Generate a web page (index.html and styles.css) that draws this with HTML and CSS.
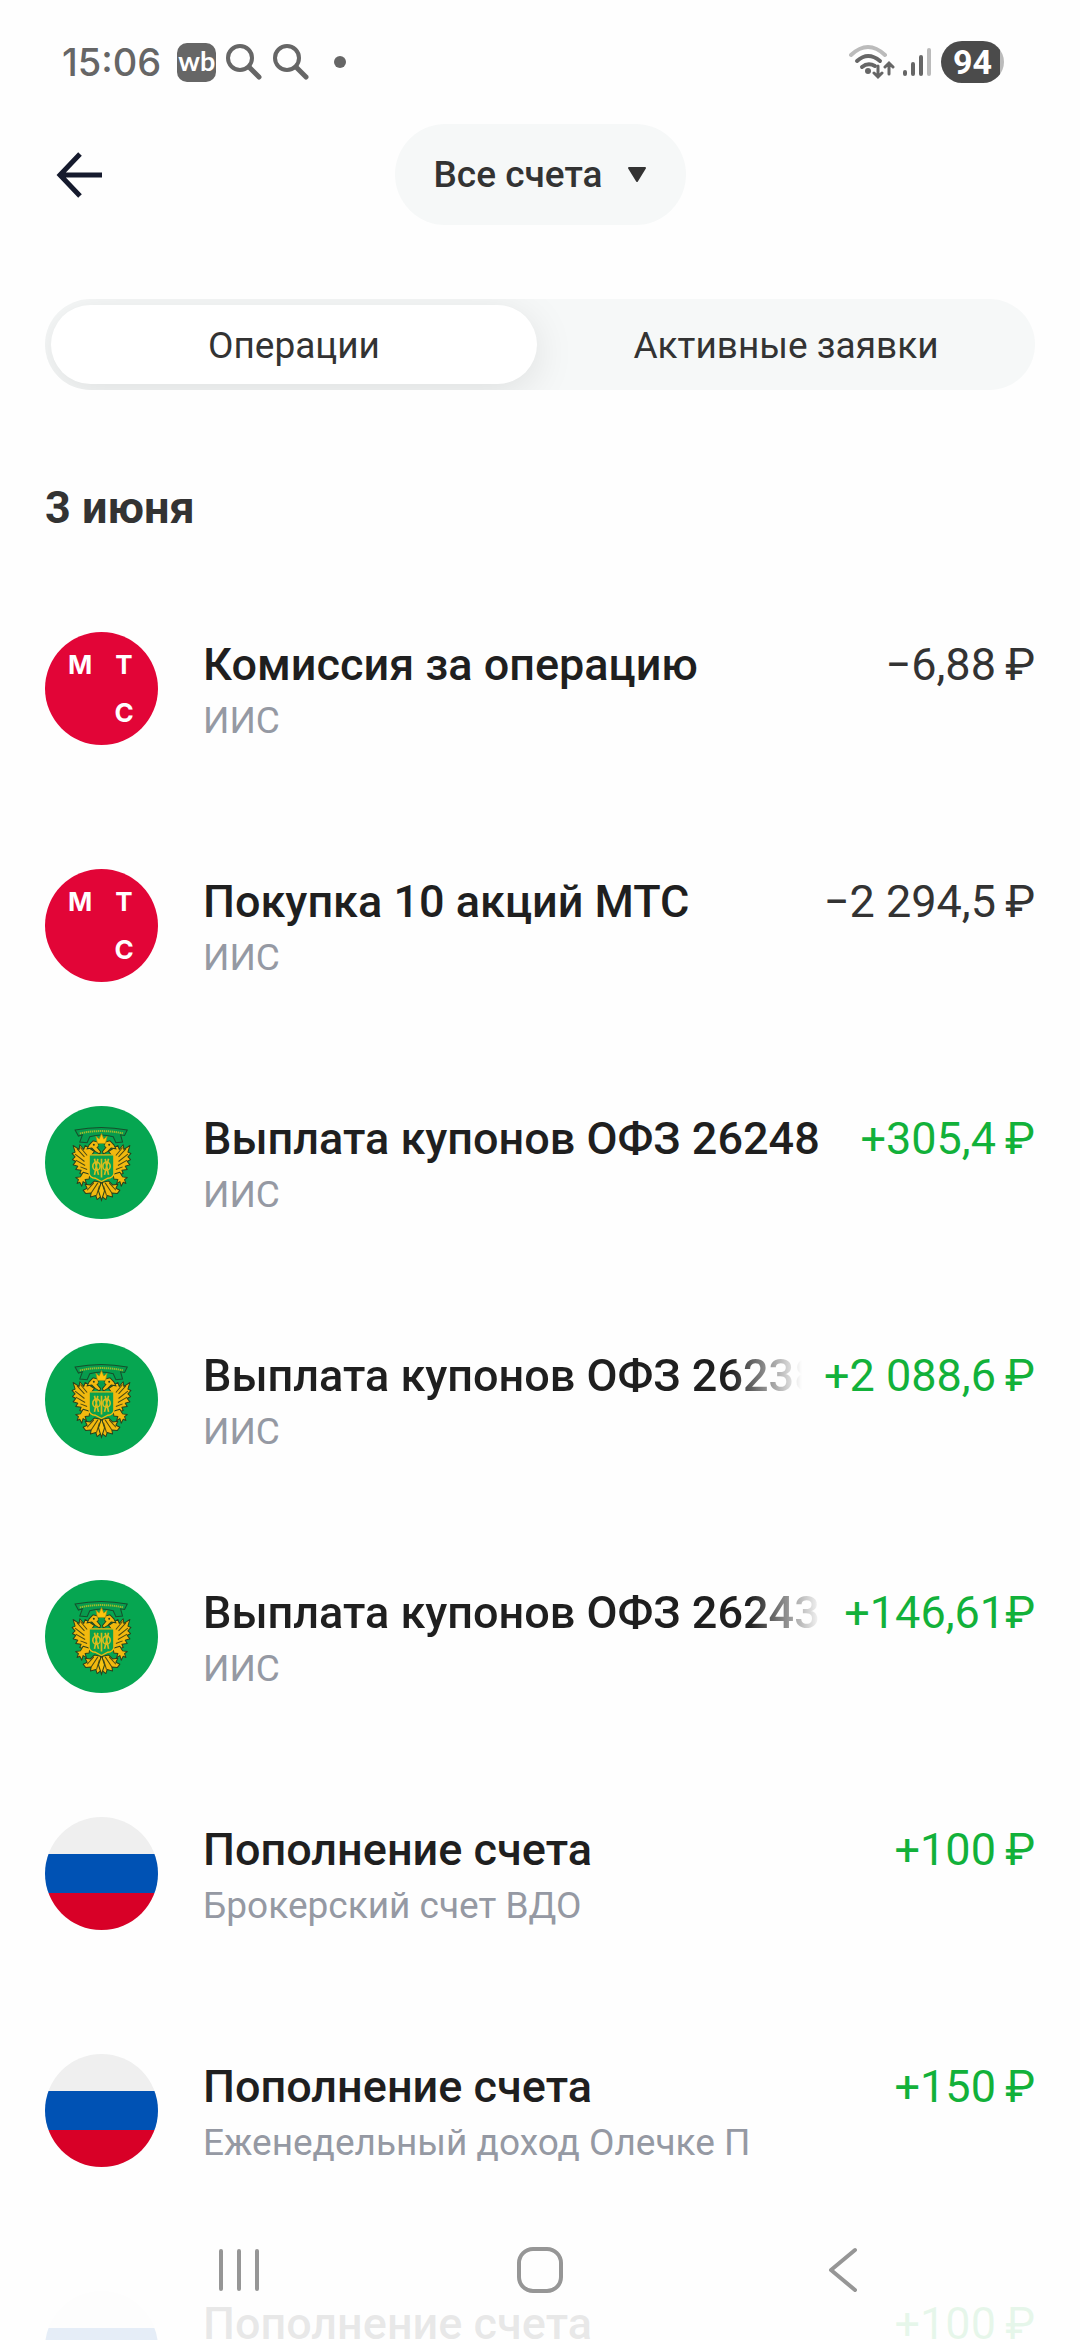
FILE: index.html
```html
<!DOCTYPE html>
<html lang="ru">

<head>
    <meta charset="UTF-8">
    <meta name="viewport" content="width=device-width, initial-scale=1.0">
    <title>Операции</title>
    <link rel="stylesheet" href="styles.css">
</head>

<body>
    <!-- иконки, которые повторяются в списке -->
    <svg class="sprite" aria-hidden="true">
        <symbol id="search" viewBox="0 0 36 36">
            <circle cx="14" cy="14" r="12" fill="none" stroke="#666" stroke-width="4" />
            <path d="M23 23L33 33" stroke="#666" stroke-width="5" stroke-linecap="round" />
        </symbol>
        <symbol id="ofz" viewBox="46 78 338 338">
            <rect x="46" y="78" width="338" height="338" fill="#06a651" />
            <!-- лента -->
            <path d="M136 150Q214 134 292 150L284 166L272 164L278 186L258 188L250 170Q214 160 180 170L172 188L150 186L158 164L146 168Z" fill="#079b4d" stroke="#164f2c" stroke-width="3" />
            <path d="M150 160Q214 146 280 160" fill="none" stroke="#9cba2c" stroke-width="6" stroke-dasharray="4 2" />
            <!-- половина орла, вторая отражается -->
            <g id="half">
                <path d="M194 214L166 196L162 208L150 194L148 208L130 196L136 216L127 220L136 230L128 238L138 244L130 254L144 258L138 268L154 270L150 280L164 284L184 286L184 226Z" fill="#f2b90f" stroke="#29401c" stroke-width="3" stroke-linejoin="round" />
                <path d="M142 206L164 230M136 222L164 244M138 240L166 256M152 202L172 226M152 260L172 268" stroke="#4b4a12" stroke-width="3" />
                <path d="M210 222L196 214L186 204L172 206L178 194L190 182L204 186L208 198L202 202L212 214Z" fill="#f2b90f" stroke="#29401c" stroke-width="3" />
                <circle cx="192" cy="194" r="3" fill="#29401c" />
                <path d="M160 276L180 282L178 296L166 298L170 310L160 304L156 318L150 306L142 310L146 298L138 292L152 290Z" fill="#f2b90f" stroke="#29401c" stroke-width="3" stroke-linejoin="round" />
                <path d="M212 306L194 302L182 314L166 312L172 324L160 330L168 340L184 338L182 350L198 346L202 358L212 350Z" fill="#f2b90f" stroke="#29401c" stroke-width="3" stroke-linejoin="round" />
                <path d="M204 308L184 338M209 316L200 346M192 308L172 330" stroke="#4b4a12" stroke-width="3" />
            </g>
            <use href="#half" transform="translate(430 0) scale(-1 1)" />
            <path d="M215 304L206 332L215 360L224 332Z" fill="#f6c413" stroke="#29401c" stroke-width="3" />
            <!-- корона -->
            <path d="M198 168L208 177L215 160L222 177L232 168L227 190H203Z" fill="#fdc50d" stroke="#9a8a12" stroke-width="2" />
            <path d="M203 194H227L215 212Z" fill="#079b4d" />
            <!-- щит -->
            <path d="M178 224H252V280Q250 292 234 294L215 304L196 294Q180 292 178 280Z" fill="#0aa14e" stroke="#f2b90f" stroke-width="4" />
            <g fill="none" stroke="#d9bd1d" stroke-width="5">
                <path d="M215 236V292M194 236L206 284M236 236L224 284M204 236L194 284M226 236L236 284" />
                <ellipse cx="200" cy="258" rx="11" ry="12" />
                <ellipse cx="230" cy="258" rx="11" ry="12" />
            </g>
        </symbol>
        <symbol id="rus" viewBox="0 0 113 113">
            <rect width="113" height="113" fill="#efefef" />
            <rect y="37" width="113" height="39" fill="#0052b4" />
            <rect y="76" width="113" height="37" fill="#d80027" />
        </symbol>
    </svg>

    <div class="screen">
        <div class="status">
            <span class="time">15:06</span>
            <span class="wb">wb</span>
            <svg class="loupe"><use href="#search" /></svg>
            <svg class="loupe"><use href="#search" /></svg>
            <span class="dot"></span>
            <svg class="wifi" viewBox="0 0 46 36">
                <g fill="none" stroke="#666" stroke-width="4" stroke-linecap="round">
                    <path d="M2 11Q19 -5 36 11" stroke="#bbb" />
                    <path d="M8 17Q19 7 31 17" />
                    <path d="M13 23Q19 18 26 22" />
                    <path d="M29 22V32M25 29L29 33L33 29M40 30V20M36 23L40 19L44 23" stroke-width="3" />
                </g>
                <circle cx="19" cy="27" r="3" fill="#666" />
            </svg>
            <svg class="signal" viewBox="0 0 28 30">
                <g stroke="#666" stroke-width="4" stroke-linecap="round">
                    <path d="M2 25V27M10 17V27M18 10V27" />
                    <path d="M26 3V27" stroke="#bbb" />
                </g>
            </svg>
            <span class="battery">94</span>
        </div>

        <div class="header">
            <button class="back" aria-label="Назад">
                <svg viewBox="0 0 46 46" width="46" height="46">
                    <path d="M46 23H4M24 2L4 23L24 44" fill="none" stroke="#151a2d" stroke-width="5" />
                </svg>
            </button>
            <button class="account">
                Все счета
                <svg viewBox="0 0 20 16" width="20" height="16">
                    <path d="M2 1H18L10 14Z" fill="#333" stroke="#333" stroke-width="2" stroke-linejoin="round" />
                </svg>
            </button>
        </div>

        <div class="tabs">
            <button class="tab active">Операции</button>
            <button class="tab">Активные заявки</button>
        </div>

        <h2 class="date">3 июня</h2>

        <ul class="list">
            <li class="item">
                <div class="logo mts">
                    <span>М</span>
                    <span>Т</span>
                    <span class="last">С</span>
                </div>
                <div class="info">
                    <p class="name">Комиссия за операцию</p>
                    <p class="sub">ИИС</p>
                </div>
                <span class="sum">−6,88&thinsp;₽</span>
            </li>
            <li class="item">
                <div class="logo mts">
                    <span>М</span>
                    <span>Т</span>
                    <span class="last">С</span>
                </div>
                <div class="info">
                    <p class="name">Покупка 10 акций МТС</p>
                    <p class="sub">ИИС</p>
                </div>
                <span class="sum">−2 294,5&thinsp;₽</span>
            </li>
            <li class="item">
                <svg class="logo"><use href="#ofz" /></svg>
                <div class="info">
                    <p class="name">Выплата купонов ОФЗ 26248</p>
                    <p class="sub">ИИС</p>
                </div>
                <span class="sum plus">+305,4&thinsp;₽</span>
            </li>
            <li class="item">
                <svg class="logo"><use href="#ofz" /></svg>
                <div class="info">
                    <p class="name fade">Выплата купонов ОФЗ 26238</p>
                    <p class="sub">ИИС</p>
                </div>
                <span class="sum plus">+2 088,6&thinsp;₽</span>
            </li>
            <li class="item">
                <svg class="logo"><use href="#ofz" /></svg>
                <div class="info">
                    <p class="name fade">Выплата купонов ОФЗ 26243</p>
                    <p class="sub">ИИС</p>
                </div>
                <span class="sum plus">+146,61₽</span>
            </li>
            <li class="item">
                <svg class="logo"><use href="#rus" /></svg>
                <div class="info">
                    <p class="name">Пополнение счета</p>
                    <p class="sub">Брокерский счет ВДО</p>
                </div>
                <span class="sum plus">+100&thinsp;₽</span>
            </li>
            <li class="item">
                <svg class="logo"><use href="#rus" /></svg>
                <div class="info">
                    <p class="name">Пополнение счета</p>
                    <p class="sub">Еженедельный доход Олечке П</p>
                </div>
                <span class="sum plus">+150&thinsp;₽</span>
            </li>
            <li class="item">
                <svg class="logo"><use href="#rus" /></svg>
                <div class="info">
                    <p class="name">Пополнение счета</p>
                </div>
                <span class="sum plus">+100&thinsp;₽</span>
            </li>
        </ul>

        <div class="navbar">
            <button aria-label="Недавние">
                <svg viewBox="0 0 48 48" width="48" height="48">
                    <path d="M6 5V43M24 5V43M42 5V43" stroke="#969696" stroke-width="4" stroke-linecap="round" />
                </svg>
            </button>
            <button aria-label="Домой">
                <svg viewBox="0 0 48 48" width="48" height="48">
                    <rect x="3" y="3" width="42" height="42" rx="14" fill="none" stroke="#969696" stroke-width="4" />
                </svg>
            </button>
            <button aria-label="Назад">
                <svg viewBox="0 0 48 48" width="48" height="48">
                    <path d="M38 4L14 24L38 44" fill="none" stroke="#969696" stroke-width="4" stroke-linecap="round" stroke-linejoin="round" />
                </svg>
            </button>
        </div>
    </div>
</body>

</html>
```
FILE: styles.css
```css
* {
    margin: 0;
    padding: 0;
    box-sizing: border-box;
}

body {
    background-color: #fefefe;
    font-family: Roboto, sans-serif;
    color: #333;
}

button {
    border: none;
    background: none;
    font: inherit;
    color: inherit;
}

svg {
    display: block;
    flex-shrink: 0;
}

.sprite {
    position: absolute;
    width: 0;
    height: 0;
}

.screen {
    position: relative;
    display: flex;
    flex-direction: column;
    height: 100vh;
    overflow: hidden;
}

/* строка состояния */
.status {
    display: flex;
    align-items: center;
    flex-shrink: 0;
    height: 124px;
    padding: 0 76px 0 62px;
    color: #666;
}

.time {
    font-family: Inter, sans-serif;
    font-size: 38px;
    font-weight: 500;
    margin-right: 16px;
}

.wb {
    width: 39px;
    height: 39px;
    border-radius: 10px;
    margin-right: 10px;
    background-color: #666;
    color: #fff;
    font-family: Lato, sans-serif;
    font-size: 27px;
    font-weight: 700;
    line-height: 36px;
    text-align: center;
}

.loupe {
    width: 36px;
    height: 36px;
    margin-right: 11px;
}

.dot {
    width: 12px;
    height: 12px;
    margin-left: 14px;
    border-radius: 50%;
    background-color: #666;
}

.wifi {
    width: 46px;
    height: 36px;
    margin-left: auto;
}

.signal {
    width: 28px;
    height: 30px;
    margin: 0 10px 0 8px;
}

.battery {
    width: 63px;
    height: 42px;
    border-radius: 21px;
    background: linear-gradient(to right, #4b4b4b 94%, #bbb 94%);
    color: #fff;
    font-size: 34px;
    font-weight: 700;
    line-height: 42px;
    text-align: center;
}

/* шапка */
.header {
    display: grid;
    grid-template-columns: 1fr auto 1fr;
    align-items: center;
    flex-shrink: 0;
    padding: 0 56px;
}

.back {
    justify-self: start;
}

.account {
    display: flex;
    align-items: center;
    gap: 24px;
    padding: 28px 39px;
    border-radius: 51px;
    background-color: #f6f8f8;
    font-size: 37px;
    font-weight: 500;
    line-height: 45px;
}

.tabs {
    display: grid;
    grid-template-columns: 1fr 1fr;
    gap: 6px;
    flex-shrink: 0;
    margin: 74px 45px 0;
    padding: 6px;
    border-radius: 46px;
    background-color: #f6f8f8;
    overflow: hidden;
}

.tab {
    padding: 18px 0 16px;
    border-radius: 40px;
    font-size: 37px;
    line-height: 45px;
}

.tab.active {
    background-color: #fff;
    box-shadow: 0 8px 40px rgba(0, 0, 0, 0.1);
}

.date {
    flex-shrink: 0;
    margin: 91px 45px 35px;
    font-size: 45px;
    font-weight: 700;
    line-height: 54px;
}

/* список операций */
.list {
    flex: 1;
    min-height: 0;
    padding: 0 45px;
    list-style: none;
    overflow-y: auto;
    scrollbar-width: none;
}

.item {
    display: flex;
    align-items: flex-start;
    padding: 62px 0;
}

.logo {
    flex-shrink: 0;
    width: 113px;
    height: 113px;
    margin-right: 45px;
    border-radius: 50%;
}

.mts {
    display: grid;
    grid-template-columns: 44px 44px;
    grid-template-rows: 48px 48px;
    align-content: start;
    padding: 9px 13px;
    background-color: #e20537;
    color: #fff;
    font-family: Inter, sans-serif;
    font-size: 26px;
    font-weight: 700;
    line-height: 48px;
    text-align: center;
}

.mts .last {
    grid-column: 2;
}

.info {
    flex: 1;
    min-width: 0;
    padding-top: 6px;
}

.name {
    color: #1f1f1f;
    font-size: 45px;
    font-weight: 500;
    line-height: 54px;
    white-space: nowrap;
    overflow: hidden;
}

.fade {
    -webkit-mask-image: linear-gradient(to left, transparent, #000 72px);
    mask-image: linear-gradient(to left, transparent, #000 72px);
}

.sub {
    margin-top: 6px;
    color: #9599a3;
    font-size: 37px;
    line-height: 45px;
}

.sum {
    padding: 6px 0 0 22px;
    font-size: 45px;
    line-height: 54px;
    white-space: nowrap;
}

.plus {
    color: #12b13a;
}

/* нижняя панель лежит поверх списка */
.navbar {
    position: absolute;
    left: 0;
    right: 0;
    bottom: 0;
    display: flex;
    height: 140px;
    padding: 0 88px;
    background-color: rgba(254, 254, 254, 0.9);
}

.navbar button {
    display: flex;
    flex: 1;
    align-items: center;
    justify-content: center;
}
```
